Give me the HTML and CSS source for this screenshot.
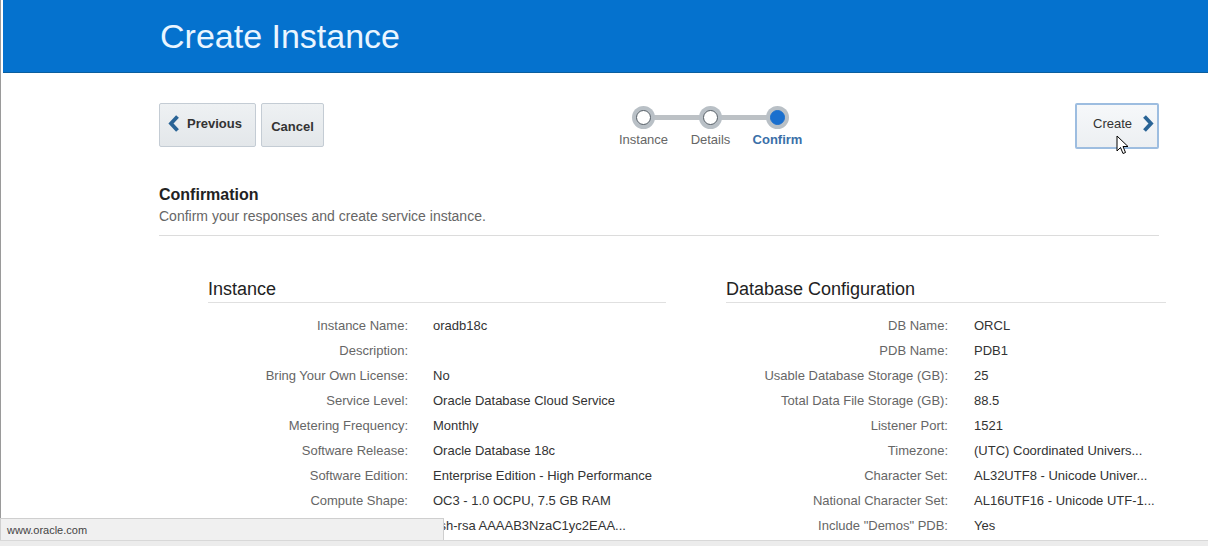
FILE: index.html
```html
<!DOCTYPE html>
<html lang="en">
<head>
<meta charset="UTF-8">
<title>Create Instance</title>
<link rel="stylesheet" href="styles.css">
</head>
<body>

<div class="page">
    <div class="header">
        <h1>Create Instance</h1>
    </div>

    <div class="content">
        <div class="toolbar">
            <div class="nav-left">
                <button class="btn btn-prev">
                    <svg width="12" height="17" viewBox="0 0 12 17"><path d="M9.5 1.5 L3 8.5 L9.5 15.5" fill="none" stroke="#2a6496" stroke-width="3.8"/></svg>
                    Previous
                </button>
                <button class="btn btn-cancel">Cancel</button>
            </div>

            <div class="train">
                <div class="step done">
                    <span class="dot"></span>
                    <span class="step-label">Instance</span>
                </div>
                <div class="step done">
                    <span class="dot"></span>
                    <span class="step-label">Details</span>
                </div>
                <div class="step current">
                    <span class="dot"></span>
                    <span class="step-label">Confirm</span>
                </div>
            </div>

            <button class="btn btn-create">
                Create
                <svg width="12" height="17" viewBox="0 0 12 17"><path d="M2.5 1.5 L9 8.5 L2.5 15.5" fill="none" stroke="#2a6496" stroke-width="3.8"/></svg>
            </button>
        </div>

        <div class="intro">
            <h2>Confirmation</h2>
            <p>Confirm your responses and create service instance.</p>
        </div>

        <div class="sections">
            <div class="section">
                <h3>Instance</h3>
                <div class="props props-left">
                    <span class="lbl">Instance Name:</span><span class="val">oradb18c</span>
                    <span class="lbl">Description:</span><span class="val"></span>
                    <span class="lbl">Bring Your Own License:</span><span class="val">No</span>
                    <span class="lbl">Service Level:</span><span class="val">Oracle Database Cloud Service</span>
                    <span class="lbl">Metering Frequency:</span><span class="val">Monthly</span>
                    <span class="lbl">Software Release:</span><span class="val">Oracle Database 18c</span>
                    <span class="lbl">Software Edition:</span><span class="val">Enterprise Edition - High Performance</span>
                    <span class="lbl">Compute Shape:</span><span class="val">OC3 - 1.0 OCPU, 7.5 GB RAM</span>
                    <span class="lbl">SSH Public Key:</span><span class="val">ssh-rsa AAAAB3NzaC1yc2EAA...</span>
                </div>
            </div>
            <div class="section">
                <h3>Database Configuration</h3>
                <div class="props props-right">
                    <span class="lbl">DB Name:</span><span class="val">ORCL</span>
                    <span class="lbl">PDB Name:</span><span class="val">PDB1</span>
                    <span class="lbl">Usable Database Storage (GB):</span><span class="val">25</span>
                    <span class="lbl">Total Data File Storage (GB):</span><span class="val">88.5</span>
                    <span class="lbl">Listener Port:</span><span class="val">1521</span>
                    <span class="lbl">Timezone:</span><span class="val">(UTC) Coordinated Univers...</span>
                    <span class="lbl">Character Set:</span><span class="val">AL32UTF8 - Unicode Univer...</span>
                    <span class="lbl">National Character Set:</span><span class="val">AL16UTF16 - Unicode UTF-1...</span>
                    <span class="lbl">Include "Demos" PDB:</span><span class="val">Yes</span>
                </div>
            </div>
        </div>
    </div>
</div>

<svg class="cursor" width="14" height="20" viewBox="0 0 14 20"><path d="M1 1 L1 16 L4.5 12.5 L7 18.5 L9.5 17.5 L7 11.5 L12 11.5 Z" fill="#fff" stroke="#000" stroke-width="1"/></svg>

<div class="statusbar">www.oracle.com</div>
<div class="hscroll"></div>

</body>
</html>
```

FILE: styles.css
```css
body {
    margin: 0;
    font-family: "Liberation Sans", Arial, sans-serif;
    color: #333;
    background: #fff;
    overflow: hidden;
}
.page {
    border-left: 1px solid #9a9a9a;
    padding-left: 2px;
    height: 546px;
}
.header {
    background: #0572ce;
    height: 73px;
    padding-left: 157px;
    box-sizing: border-box;
    border-bottom: 1px solid #0a5e9e;
}
.header h1 {
    margin: 0;
    padding-top: 15px;
    font-size: 34px;
    font-weight: normal;
    color: #eaf5ff;
    line-height: 42px;
}
.content {
    width: 1000px;
    margin-left: 156px;
}
.toolbar {
    display: flex;
    align-items: flex-start;
    margin-top: 30px;
}
.nav-left {
    display: flex;
    gap: 5px;
}
.btn {
    font-family: "Liberation Sans", Arial, sans-serif;
    font-size: 13px;
    color: #333;
    border: 1px solid #c4ccd4;
    border-radius: 2px;
    background: linear-gradient(#eef1f3, #e3e7ea);
    height: 44px;
    display: flex;
    align-items: center;
    cursor: pointer;
}
.btn-prev {
    width: 97px;
    font-weight: bold;
    padding: 0 0 3px 8px;
    gap: 7px;
}
.btn-cancel {
    width: 63px;
    font-weight: bold;
    justify-content: center;
    padding: 2px 0 0;
}
.btn-create {
    margin-left: auto;
    width: 84px;
    height: 46px;
    padding: 0 0 5px 16px;
    gap: 10px;
    background: linear-gradient(#f6f8fa, #eceff2);
    border: 2px solid #9dbde0;
}
.train {
    display: grid;
    grid-template-columns: repeat(3, 67px);
    margin-left: 286px;
    margin-top: 3px;
}
.step {
    position: relative;
    display: flex;
    flex-direction: column;
    align-items: center;
}
.step + .step::before {
    content: "";
    position: absolute;
    top: 9px;
    right: 50%;
    width: 67px;
    height: 5px;
    background: #bcc1c5;
}
.dot {
    position: relative;
    z-index: 1;
    width: 13px;
    height: 13px;
    border-radius: 50%;
    background: #fff;
    border: 1px solid #555e66;
    box-shadow: 0 0 0 4px #b9c0c6;
    margin-top: 4px;
}
.current .dot {
    background: #1a6fce;
    border-color: #1a6fce;
}
.step-label {
    margin-top: 7px;
    font-size: 13px;
    color: #666;
}
.current .step-label {
    color: #3a6fa8;
    font-weight: bold;
}
.intro {
    margin-top: 36px;
    border-bottom: 1px solid #dcdcdc;
    padding-bottom: 10px;
}
.intro h2 {
    margin: 0;
    font-size: 16px;
    line-height: 20px;
    color: #222;
}
.intro p {
    margin: 2px 0 0;
    font-size: 14px;
    line-height: 18px;
    color: #666;
}
.sections {
    display: grid;
    grid-template-columns: 458px 440px;
    column-gap: 60px;
    margin-left: 49px;
    margin-top: 42px;
}
.section h3 {
    margin: 0;
    font-size: 18px;
    font-weight: normal;
    color: #222;
    line-height: 22px;
    padding-bottom: 2px;
    border-bottom: 1px solid #e0e0e0;
}
.props {
    display: grid;
    column-gap: 25px;
    padding-top: 10px;
    font-size: 13px;
    line-height: 25px;
}
.props-left {
    grid-template-columns: 200px 1fr;
}
.props-right {
    grid-template-columns: 222px 1fr;
    column-gap: 26px;
}
.lbl {
    text-align: right;
    color: #666;
}
.val {
    color: #333;
    white-space: nowrap;
}
.cursor {
    position: absolute;
    left: 1116px;
    top: 135px;
}
.statusbar {
    position: fixed;
    left: 0;
    top: 518px;
    width: 436px;
    height: 22px;
    background: #f0f0f0;
    border: 1px solid #cfcfcf;
    font-size: 11px;
    line-height: 22px;
    padding-left: 6px;
    color: #444;
}
.hscroll {
    position: fixed;
    left: 0;
    right: 0;
    bottom: 0;
    height: 5px;
    background: #ececec;
    border-top: 1px solid #d8d8d8;
}
```
